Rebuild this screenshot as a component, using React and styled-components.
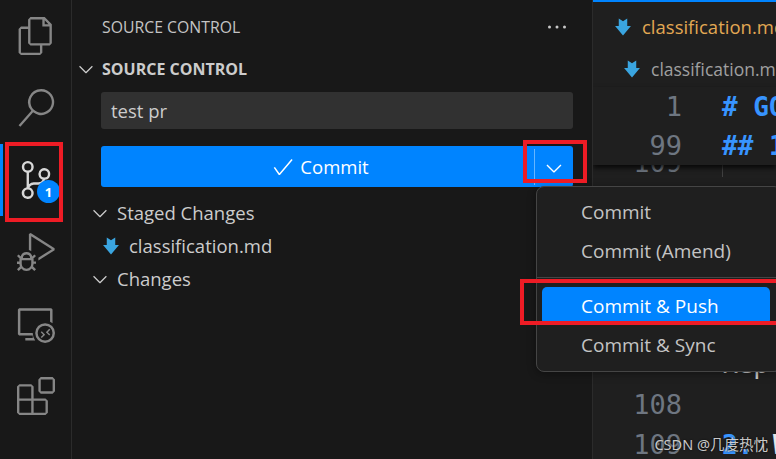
import React from 'react';
import styled, { createGlobalStyle } from 'styled-components';
import {
  VscFiles,
  VscSearch,
  VscSourceControl,
  VscDebugAlt,
  VscRemoteExplorer,
  VscExtensions,
  VscChevronDown,
  VscEllipsis,
  VscCheck,
} from 'react-icons/vsc';

const GlobalStyle = createGlobalStyle`
  html, body {
    margin: 0;
    padding: 0;
    background: #181818;
  }
`

const Window = styled.div`
  position: relative;
  display: flex;
  width: 776px;
  height: 459px;
  overflow: hidden;
  background: #181818;
  color: #cccccc;
  font-family: "Open Sans", "Noto Sans", sans-serif;
  font-size: 18.5px;
`

/* activity bar */
const ActivityBar = styled.nav`
  flex: 0 0 72px;
  box-sizing: border-box;
  border-right: 1px solid #2b2b2b;
  display: flex;
  flex-direction: column;
`
const ActivityItem = styled.div`
  position: relative;
  height: 72px;
  display: flex;
  align-items: center;
  justify-content: center;
  color: ${(p) => (p.$active ? '#d7d7d7' : '#868686')};
  &::before {
    content: '';
    display: ${(p) => (p.$active ? 'block' : 'none')};
    position: absolute;
    left: 0;
    top: 0;
    bottom: 0;
    width: 3px;
    background: #0084ff;
  }
`
const Badge = styled.span`
  position: absolute;
  left: 37px;
  top: 36px;
  width: 23px;
  height: 23px;
  border-radius: 50%;
  background: #0084ff;
  color: #fff;
  font-size: 13px;
  font-weight: 700;
  display: flex;
  align-items: center;
  justify-content: center;
`

/* sidebar */
const Sidebar = styled.aside`
  flex: 0 0 521px;
  box-sizing: border-box;
  border-right: 1px solid #2b2b2b;
  display: flex;
  flex-direction: column;
`
const PanelHeader = styled.div`
  height: 54px;
  padding: 0 23px 0 30px;
  display: flex;
  align-items: center;
  justify-content: space-between;
  font-size: 15.8px;
  color: #c4c4c4;
`
const SectionHeader = styled.div`
  height: 30px;
  display: flex;
  align-items: center;
  gap: 5px;
  padding-left: 3px;
  font-size: 16px;
  font-weight: 700;
  color: #cccccc;
`
const Repo = styled.div`
  padding: 8px 19px 0 29px;
  display: flex;
  flex-direction: column;
`
const MessageInput = styled.div`
  height: 37px;
  box-sizing: border-box;
  background: #313131;
  border-radius: 3px;
  padding: 0 10px;
  display: flex;
  align-items: center;
  color: #cccccc;
`
const CommitButton = styled.div`
  margin-top: 17px;
  height: 41px;
  border-radius: 3px;
  background: #0084ff;
  color: #fff;
  display: flex;
  align-items: center;
`
const CommitLabel = styled.div`
  flex: 1;
  display: flex;
  align-items: center;
  justify-content: center;
  gap: 5px;
  padding-left: 5px;
`
const SplitArrow = styled.div`
  flex: 0 0 38px;
  height: 33px;
  border-left: 1px solid #66b5ff;
  display: flex;
  align-items: center;
  justify-content: center;
  padding-top: 3px;
`
const Tree = styled.div`
  padding-top: 9px;
  display: flex;
  flex-direction: column;
`
const TreeRow = styled.div`
  height: 33px;
  display: flex;
  align-items: center;
  padding-left: ${(p) => p.$indent}px;
  gap: ${(p) => p.$gap}px;
  color: #cccccc;
`

/* editor */
const Editor = styled.main`
  flex: 1;
  min-width: 0;
  background: #1f1f1f;
  display: flex;
  flex-direction: column;
  overflow: hidden;
  white-space: nowrap;
`
const Tab = styled.div`
  flex: 0 0 51px;
  box-sizing: border-box;
  border-top: 2px solid #0084ff;
  padding-left: 21px;
  display: flex;
  align-items: center;
  gap: 10px;
  color: #e2a853;
`
const Breadcrumb = styled.div`
  flex: 0 0 36px;
  padding-left: 30px;
  display: flex;
  align-items: center;
  gap: 10px;
  font-size: 17.5px;
  color: #a0a0a0;
`
const Sticky = styled.div`
  flex: 0 0 auto;
  position: relative;
  z-index: 1;
  background: #1f1f1f;
  box-shadow: 0 3px 5px rgba(0, 0, 0, 0.75);
`
const Code = styled.div`
  flex: 0 0 auto;
  margin-top: -23px;
  display: flex;
  flex-direction: column;
`
const Line = styled.div`
  flex: 0 0 auto;
  height: ${(p) => p.$height || 40.4}px;
  display: flex;
  align-items: center;
  font-family: "DejaVu Sans Mono", "Liberation Mono", monospace;
  font-size: 26px;
`
const LineNo = styled.span`
  flex: 0 0 89px;
  text-align: right;
  font-size: 27px;
  color: #6e7681;
`
const LineText = styled.span`
  margin-left: 40px;
  font-weight: ${(p) => (p.$bold ? 700 : 400)};
  color: ${(p) => p.$color || '#cccccc'};
  border-left: ${(p) => (p.$guide ? '1px solid #404040' : 'none')};
`
const Bare = styled.span`
  margin-left: 4px;
  color: #e4e4e4;
`

/* overlays */
const Menu = styled.div`
  position: absolute;
  left: 536px;
  top: 186px;
  width: 246px;
  height: 186px;
  box-sizing: border-box;
  padding-top: 5px;
  background: #1f1f1f;
  border: 1px solid #454545;
  border-radius: 8px;
  z-index: 2;
  box-shadow: 0 2px 8px rgba(0, 0, 0, 0.36);
`
const MenuItem = styled.div`
  height: ${(p) => p.$height}px;
  width: 228px;
  margin-left: 5px;
  box-sizing: border-box;
  padding-left: 39px;
  display: flex;
  align-items: center;
  font-size: 19px;
  border-radius: 5px;
  color: ${(p) => (p.$selected ? '#ffffff' : '#c4c4c4')};
  background: ${(p) => (p.$selected ? '#0084ff' : 'transparent')};
`
const MenuSeparator = styled.div`
  height: 1px;
  margin: 7px 0 9px;
  background: #454545;
`
const Callout = styled.div`
  position: absolute;
  left: ${(p) => p.$left}px;
  top: ${(p) => p.$top}px;
  width: ${(p) => p.$width}px;
  height: ${(p) => p.$h}px;
  box-sizing: border-box;
  border: 4px solid #ee1c25;
  z-index: 3;
`
const Watermark = styled.div`
  position: absolute;
  right: 8px;
  bottom: 5px;
  z-index: 4;
  font-family: "Noto Sans", "Noto Sans CJK SC", sans-serif;
  font-size: 14.5px;
  color: rgba(235, 235, 235, 0.85);
  text-shadow: 0 0 2px rgba(0, 0, 0, 0.9);
`
const FileGlyph = styled.svg`
  flex: 0 0 auto;
`

const MarkdownIcon = ({ size = 18 }) => (
  <FileGlyph width={size} height={size} viewBox="0 0 16 17">
    <path d="M4 0.5 L8 3 L12 0.5 V7.5 H15.5 L8 16.5 L0.5 7.5 H4 Z" fill="#3aa5e0" />
  </FileGlyph>
)

const Chevron = ({ size = 22, color }) => <VscChevronDown size={size} color={color} />

const App = () => {
  return (
    <Window>
      <GlobalStyle />
      <ActivityBar>
        <ActivityItem><VscFiles size={38} /></ActivityItem>
        <ActivityItem><VscSearch size={38} /></ActivityItem>
        <ActivityItem $active>
          <VscSourceControl size={38} />
          <Badge>1</Badge>
        </ActivityItem>
        <ActivityItem><VscDebugAlt size={38} /></ActivityItem>
        <ActivityItem><VscRemoteExplorer size={38} /></ActivityItem>
        <ActivityItem><VscExtensions size={38} /></ActivityItem>
      </ActivityBar>

      <Sidebar>
        <PanelHeader>
          <span>SOURCE CONTROL</span>
          <VscEllipsis size={24} color="#c8c8c8" />
        </PanelHeader>
        <SectionHeader>
          <Chevron />
          <span>SOURCE CONTROL</span>
        </SectionHeader>
        <Repo>
          <MessageInput>test pr</MessageInput>
          <CommitButton>
            <CommitLabel>
              <VscCheck size={24} />
              <span>Commit</span>
            </CommitLabel>
            <SplitArrow><Chevron size={24} color="#fff" /></SplitArrow>
          </CommitButton>
        </Repo>
        <Tree>
          <TreeRow $indent={17} $gap={6}><Chevron />Staged Changes</TreeRow>
          <TreeRow $indent={30} $gap={9}><MarkdownIcon />classification.md</TreeRow>
          <TreeRow $indent={17} $gap={6}><Chevron />Changes</TreeRow>
        </Tree>
      </Sidebar>

      <Editor>
        <Tab><MarkdownIcon />classification.md</Tab>
        <Breadcrumb><MarkdownIcon />classification.md</Breadcrumb>
        <Sticky>
          <Line $height={39}>
            <LineNo>1</LineNo>
            <LineText $bold $color="#3794ff"># GO</LineText>
          </Line>
          <Line $height={39}>
            <LineNo>99</LineNo>
            <LineText $bold $color="#3794ff">## 1</LineText>
          </Line>
        </Sticky>
        <Code>
          <Line><LineNo>109</LineNo><LineText $guide>&nbsp;</LineText></Line>
          <Line />
          <Line />
          <Line />
          <Line />
          <Line><LineNo /><LineText>Repl</LineText></Line>
          <Line><LineNo>108</LineNo></Line>
          <Line>
            <LineNo>109</LineNo>
            <LineText $bold $color="#3794ff">2. <Bare>W</Bare></LineText>
          </Line>
        </Code>
      </Editor>

      <Menu>
        <MenuItem $height={39}>Commit</MenuItem>
        <MenuItem $height={39}>Commit (Amend)</MenuItem>
        <MenuSeparator />
        <MenuItem $height={38} $selected>Commit &amp; Push</MenuItem>
        <MenuItem $height={40}>Commit &amp; Sync</MenuItem>
      </Menu>

      <Callout $left={5} $top={142} $width={58} $h={80} />
      <Callout $left={523} $top={140} $width={64} $h={43} />
      <Callout $left={520} $top={279} $width={270} $h={46} />
      <Watermark>CSDN @几度热忱</Watermark>
    </Window>
  );
};

export default App;
